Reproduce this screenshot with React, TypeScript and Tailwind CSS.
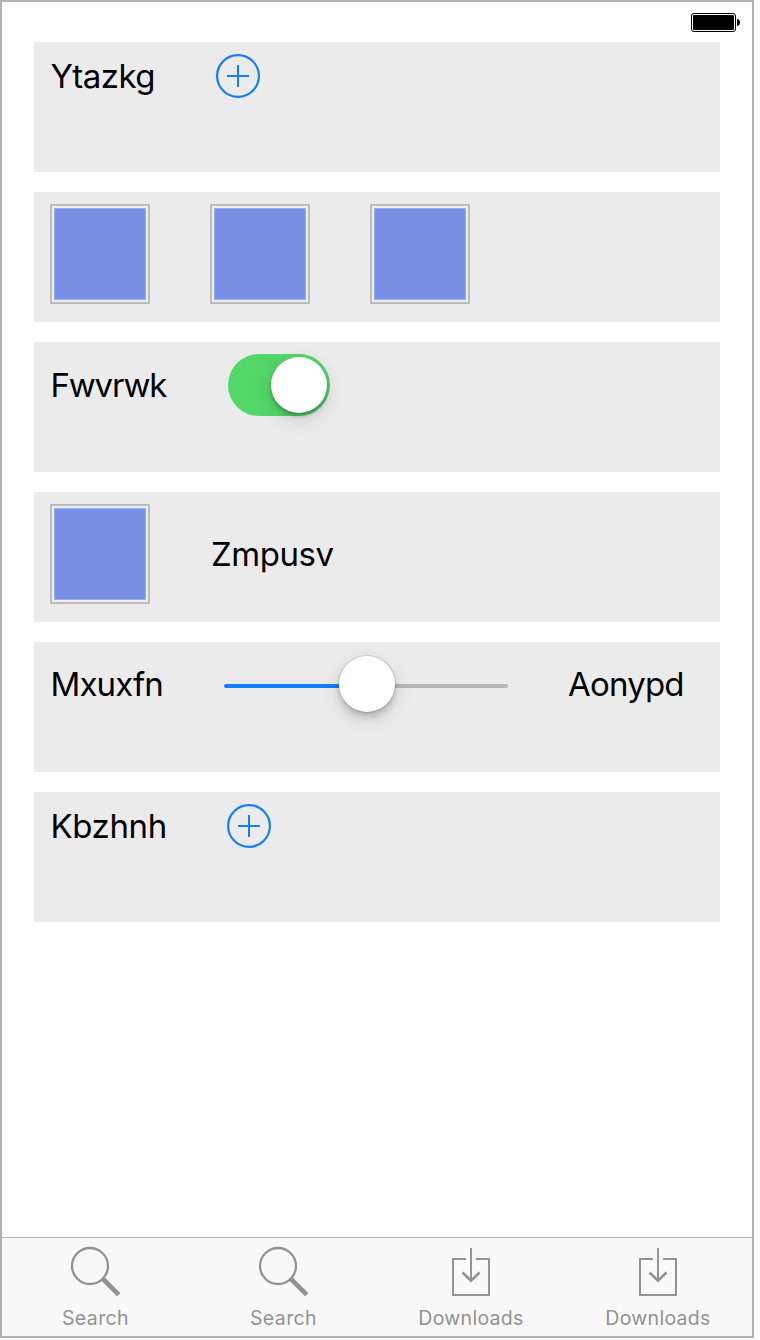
import type { ReactNode } from "react";

function Panel({ children, className = "" }: { children: ReactNode; className?: string }) {
  return (
    <section className={`flex h-[130px] items-start bg-[#ebebeb] pt-3 pl-4 ${className}`}>
      {children}
    </section>
  );
}

function Label({ children, className }: { children: string; className: string }) {
  return (
    <span className={`block shrink-0 text-[33px] leading-[40px] whitespace-nowrap ${className}`}>
      {children}
    </span>
  );
}

function AddButton() {
  return (
    <button type="button" aria-label="Add" className="size-11 shrink-0">
      <svg width="44" height="44" viewBox="0 0 44 44" fill="none" stroke="#147efb" strokeWidth="2">
        <circle cx="22" cy="22" r="20.9" strokeWidth="2.2" />
        <path d="M11 22H33M22 11V33" />
      </svg>
    </button>
  );
}

function Swatch() {
  return (
    <div className="size-[100px] shrink-0 border border-[#b8b8b8] bg-[#e9ebf2]">
      <div className="size-full border border-[#c2c2c2] p-px">
        <div className="size-full border border-[#eef1fc]">
          <div className="size-full border border-[#9aabea] bg-[#768fe2]" />
        </div>
      </div>
    </div>
  );
}

function Toggle() {
  return (
    <button
      type="button"
      role="switch"
      aria-checked="true"
      aria-label="Fwvrwk"
      className="flex h-[62px] w-[102px] shrink-0 items-center justify-end rounded-full bg-[#53d769] pr-[3px]"
    >
      <span className="size-14 rounded-full bg-white shadow-[0_6px_20px_rgba(0,0,0,0.14),0_3px_4px_rgba(0,0,0,0.26)]" />
    </button>
  );
}

function Slider() {
  return (
    <div className="flex h-[60px] w-[284px] shrink-0 items-center">
      <div className="mt-1 h-1 w-[115px] rounded-l-full bg-[#147efb]" />
      <div className="z-10 size-14 shrink-0 rounded-full bg-white shadow-[0_7px_20px_rgba(0,0,0,0.13),0_5px_6px_rgba(0,0,0,0.16),0_0_1px_1px_rgba(0,0,0,0.12)]" />
      <div className="mt-1 h-1 flex-1 rounded-r-full bg-[#b7b7b7]" />
    </div>
  );
}

function Battery() {
  return (
    <svg width="50" height="20" viewBox="0 0 50 20">
      <rect x="0.5" y="0.5" width="44" height="18" rx="2.5" fill="none" stroke="#000" />
      <rect x="2" y="2" width="41" height="15" rx="1" />
      <path d="M46 6C48 6 49 7.5 49 9.5S48 13 46 13Z" />
    </svg>
  );
}

function SearchIcon() {
  return (
    <svg width="52" height="50" viewBox="0 0 52 50" fill="none" stroke="#929292">
      <circle cx="20" cy="20" r="18" strokeWidth="2.3" />
      <path d="M32.5 32.5L48.7 48.7" strokeWidth="4.6" />
    </svg>
  );
}

function DownloadIcon() {
  return (
    <svg width="40" height="50" viewBox="0 0 40 50" fill="none" stroke="#929292" strokeWidth="2">
      <path d="M15 13H2V49H38V13H25" />
      <path d="M20 2V35" />
      <path d="M11.5 26.5L20 34.7L28.5 26.5" strokeWidth="2.6" />
    </svg>
  );
}

function Tab({ icon, label, className }: { icon: ReactNode; label: string; className: string }) {
  return (
    <button type="button" className="flex flex-col items-center pt-2">
      {icon}
      <span className={`mt-2.5 block text-[19.5px] leading-6 ${className}`}>{label}</span>
    </button>
  );
}

export default function App() {
  return (
    <div className="min-h-[1340px] bg-white font-['Inter',sans-serif] text-black">
      <div className="flex h-[1338px] w-[754px] flex-col border-2 border-[#b2b2b2] bg-white">
        <header className="flex h-10 shrink-0 justify-end pt-[11px] pr-[11px]">
          <Battery />
        </header>
        <main className="flex flex-1 flex-col gap-5 px-8">
          <Panel>
            <div className="flex h-11 items-center">
              <Label className="w-[166px] pl-[0.5px] tracking-[-0.55px]">Ytazkg</Label>
              <AddButton />
            </div>
          </Panel>
          <Panel className="gap-[60px]">
            <Swatch />
            <Swatch />
            <Swatch />
          </Panel>
          <Panel>
            <div className="flex h-[62px] items-center">
              <Label className="w-[178px] pl-[0.5px] tracking-[-1.2px]">Fwvrwk</Label>
              <Toggle />
            </div>
          </Panel>
          <Panel>
            <div className="flex h-[100px] items-center gap-[60px]">
              <Swatch />
              <Label className="pl-px tracking-[-0.45px]">Zmpusv</Label>
            </div>
          </Panel>
          <Panel>
            <div className="flex h-[60px] items-center">
              <Label className="w-[174px] pl-[0.5px] tracking-[-0.9px]">Mxuxfn</Label>
              <Slider />
              <Label className="ml-[60px] tracking-[-0.8px]">Aonypd</Label>
            </div>
          </Panel>
          <Panel>
            <div className="flex h-11 items-center">
              <Label className="w-[177px] pl-[0.5px] tracking-[-0.4px]">Kbzhnh</Label>
              <AddButton />
            </div>
          </Panel>
        </main>
        <nav className="grid h-[99px] shrink-0 grid-cols-[188px_188px_186px_188px] border-t border-[#b2b2b2] bg-[#f9f9f9] text-[#929292]">
          <Tab icon={<SearchIcon />} label="Search" className="pr-px tracking-[0.4px]" />
          <Tab icon={<SearchIcon />} label="Search" className="pr-px tracking-[0.4px]" />
          <Tab icon={<DownloadIcon />} label="Downloads" className="tracking-[0.3px]" />
          <Tab icon={<DownloadIcon />} label="Downloads" className="tracking-[0.3px]" />
        </nav>
      </div>
    </div>
  );
}
